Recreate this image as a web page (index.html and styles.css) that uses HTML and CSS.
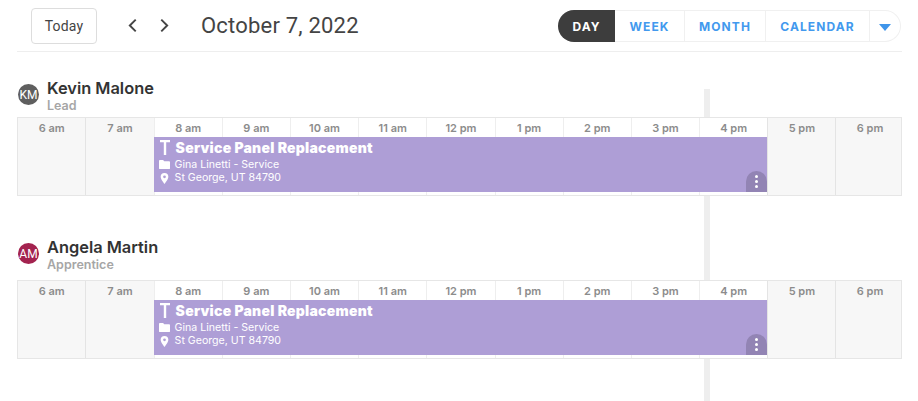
FILE: index.html
```html
<!doctype html>
<html lang="en">

<head>
  <meta charset="utf-8">
  <title>Schedule</title>
  <link rel="stylesheet" href="styles.css">
</head>

<body>
  <div class="page">
    <div class="now_line"></div>

    <div class="toolbar">
      <button class="btn_today">Today</button>
      <div class="nav">
        <svg class="chev" viewBox="0 0 10 14"><path d="M8 1.5 2.5 7 8 12.5"/></svg>
        <svg class="chev" viewBox="0 0 10 14"><path d="M2 1.5 7.5 7 2 12.5"/></svg>
      </div>
      <div class="date">October 7, 2022</div>
      <div class="views">
        <div class="view view_active">DAY</div>
        <div class="view view_week">WEEK</div>
        <div class="view view_month">MONTH</div>
        <div class="view view_cal">CALENDAR</div>
        <div class="view view_more"><svg class="caret" viewBox="0 0 12 7"><path d="M0 0h12L6 7z"/></svg></div>
      </div>
    </div>

    <div class="people">
      <div class="person">
        <div class="person_head">
          <div class="avatar avatar_km">KM</div>
          <div>
            <div class="name">Kevin Malone</div>
            <div class="role">Lead</div>
          </div>
        </div>
        <div class="hours">
          <div class="hour off">6 am</div>
          <div class="hour off">7 am</div>
          <div class="hour">8 am</div>
          <div class="hour">9 am</div>
          <div class="hour">10 am</div>
          <div class="hour">11 am</div>
          <div class="hour">12 pm</div>
          <div class="hour">1 pm</div>
          <div class="hour">2 pm</div>
          <div class="hour">3 pm</div>
          <div class="hour">4 pm</div>
          <div class="hour off">5 pm</div>
          <div class="hour off">6 pm</div>
          <div class="job">
            <div class="job_title">
              <svg class="ico_hammer" viewBox="0 0 12 17"><path d="M1 1h10v2.2H7.2V16H4.8V3.2H1z"/></svg>
              <span>Service Panel Replacement</span>
            </div>
            <div class="job_line">
              <svg class="ico" viewBox="0 0 12 10"><path d="M0 1q0-1 1-1h3.500l1.200 1.400H11q1 0 1 1V9q0 1-1 1H1q-1 0-1-1z"/></svg>
              <span>Gina Linetti - Service</span>
            </div>
            <div class="job_line">
              <svg class="ico" viewBox="0 0 12 12"><path fill-rule="evenodd" d="M6 0a4.200 4.200 0 0 1 4.200 4.200C10.200 7.200 6 12 6 12S1.800 7.200 1.800 4.200A4.200 4.200 0 0 1 6 0zm0 2.700a1.500 1.500 0 1 0 0 3 1.500 1.500 0 0 0 0-3z"/></svg>
              <span>St George, UT 84790</span>
            </div>
            <div class="job_menu"><i></i><i></i><i></i></div>
          </div>
        </div>
      </div>

      <div class="person">
        <div class="person_head">
          <div class="avatar avatar_am">AM</div>
          <div>
            <div class="name">Angela Martin</div>
            <div class="role">Apprentice</div>
          </div>
        </div>
        <div class="hours">
          <div class="hour off">6 am</div>
          <div class="hour off">7 am</div>
          <div class="hour">8 am</div>
          <div class="hour">9 am</div>
          <div class="hour">10 am</div>
          <div class="hour">11 am</div>
          <div class="hour">12 pm</div>
          <div class="hour">1 pm</div>
          <div class="hour">2 pm</div>
          <div class="hour">3 pm</div>
          <div class="hour">4 pm</div>
          <div class="hour off">5 pm</div>
          <div class="hour off">6 pm</div>
          <div class="job">
            <div class="job_title">
              <svg class="ico_hammer" viewBox="0 0 12 17"><path d="M1 1h10v2.2H7.2V16H4.8V3.2H1z"/></svg>
              <span>Service Panel Replacement</span>
            </div>
            <div class="job_line">
              <svg class="ico" viewBox="0 0 12 10"><path d="M0 1q0-1 1-1h3.500l1.200 1.400H11q1 0 1 1V9q0 1-1 1H1q-1 0-1-1z"/></svg>
              <span>Gina Linetti - Service</span>
            </div>
            <div class="job_line">
              <svg class="ico" viewBox="0 0 12 12"><path fill-rule="evenodd" d="M6 0a4.200 4.200 0 0 1 4.200 4.200C10.200 7.200 6 12 6 12S1.800 7.200 1.800 4.200A4.200 4.200 0 0 1 6 0zm0 2.700a1.500 1.500 0 1 0 0 3 1.500 1.500 0 0 0 0-3z"/></svg>
              <span>St George, UT 84790</span>
            </div>
            <div class="job_menu"><i></i><i></i><i></i></div>
          </div>
        </div>
      </div>
    </div>
  </div>
</body>

</html>
```
FILE: styles.css
```css
html, body {
  margin: 0;
  background-color: white;
}

body {
  font-family: Inter, "Liberation Sans", sans-serif;
  color: #333;
  height: 401px;
  overflow: hidden;
}

.page {
  position: relative;
  padding: 0 16px 0 17px;
}

.now_line {
  position: absolute;
  left: 704px;
  top: 89px;
  width: 6px;
  height: 312px;
  background-color: #eeeeee;
}

/* toolbar */
.toolbar {
  display: flex;
  align-items: center;
  height: 51px;
  padding: 0 1px 0 14px;
  border-bottom: 1px solid #eeeeee;
}

.btn_today {
  width: 66px;
  height: 36px;
  margin-top: 1px;
  padding: 0;
  background-color: white;
  border: 1px solid #dddddd;
  border-radius: 4px;
  font-family: Roboto, sans-serif;
  font-size: 14px;
  letter-spacing: 0.2px;
  color: #444;
}

.nav {
  display: flex;
  gap: 21px;
  margin-left: 30px;
}

.chev {
  width: 11px;
  height: 15px;
  fill: none;
  stroke: #444;
  stroke-width: 1.8;
}

.date {
  margin-left: 31px;
  font-family: Roboto, sans-serif;
  font-size: 22px;
  letter-spacing: 0.2px;
  color: #444;
}

.views {
  display: flex;
  margin-left: auto;
  height: 30px;
  border: 1px solid #f0f0f0;
  border-left: 0;
  border-radius: 16px;
  margin-top: 1px;
}

.view {
  display: flex;
  align-items: center;
  justify-content: center;
  border-left: 1px solid #f0f0f0;
  font-size: 12px;
  font-weight: 700;
  letter-spacing: 1.1px;
  color: #4299ee;
}

.view_active {
  width: 57px;
  margin: -1px 0;
  border-left: 0;
  border-radius: 16px 0 0 16px;
  background-color: #3d3d3d;
  color: white;
}

.view_week {
  width: 69px;
  border-left: 0;
}

.view_month {
  width: 80px;
}

.view_cal {
  width: 103px;
}

.view_more {
  width: 30px;
}

.caret {
  width: 12px;
  height: 7px;
  margin-top: 2px;
  fill: #3f95ea;
}

/* person rows */
.people {
  display: flex;
  flex-direction: column;
  gap: 41px;
  padding-top: 26px;
}

.person_head {
  display: flex;
  align-items: flex-start;
  gap: 8px;
  margin-bottom: 3px;
  padding-left: 1px;
}

.person + .person .person_head {
  margin-bottom: 7px;
}

.avatar {
  display: flex;
  align-items: center;
  justify-content: center;
  width: 21px;
  height: 21px;
  margin-top: 6px;
  border-radius: 50%;
  font-family: Roboto, sans-serif;
  font-size: 12px;
  color: white;
}

.avatar_km {
  background-color: #5f5f5f;
}

.avatar_am {
  background-color: #a3234f;
}

.name {
  font-size: 16.4px;
  font-weight: 600;
  line-height: 20px;
  color: #333;
}

.role {
  font-size: 12.5px;
  font-weight: 600;
  line-height: 16px;
  color: #a6a6a6;
}

/* hour grid, the last column runs off the right edge */
.hours {
  position: relative;
  display: grid;
  grid-template-columns: 67.4px repeat(12, 68.2px);
  height: 79px;
  box-sizing: border-box;
  border: 1px solid #e6e6e6;
  background-color: white;
  overflow: hidden;
}

.hour {
  box-sizing: border-box;
  padding-top: 3px;
  border-left: 1px solid #eeeeee;
  font-size: 11px;
  font-weight: 600;
  line-height: 14px;
  text-align: center;
  color: #8c8c8c;
}

.hour:first-child {
  border-left: 0;
}

.off {
  background-color: #f7f7f7;
  border-left-color: #e4e4e4;
}

/* job sits over the hour cells, from 8 am through 4 pm */
.job {
  position: absolute;
  left: 135.6px;
  width: 613.8px;
  top: 19px;
  bottom: 3px;
  box-sizing: border-box;
  padding: 1px 0 0 5px;
  background-color: #ae9ed6;
  color: white;
}

.job_title {
  display: flex;
  align-items: center;
  gap: 5px;
  height: 18px;
  font-size: 14px;
  font-weight: 900;
  letter-spacing: 0.25px;
}

.ico_hammer {
  width: 12px;
  height: 17px;
  fill: white;
}

.job_line {
  display: flex;
  align-items: center;
  gap: 5px;
  height: 13.5px;
  font-size: 10.6px;
  line-height: 14px;
}

.job_title + .job_line {
  margin-top: 2px;
}

.ico {
  width: 11px;
  height: 11px;
  fill: white;
  flex-shrink: 0;
}

.job_menu {
  position: absolute;
  right: 0;
  bottom: 0;
  display: flex;
  flex-direction: column;
  align-items: center;
  justify-content: center;
  gap: 2px;
  width: 21px;
  height: 21px;
  border-radius: 11px 11px 0 0;
  background-color: #9284b4;
}

.job_menu i {
  width: 3px;
  height: 3px;
  border-radius: 50%;
  background-color: white;
}
```
